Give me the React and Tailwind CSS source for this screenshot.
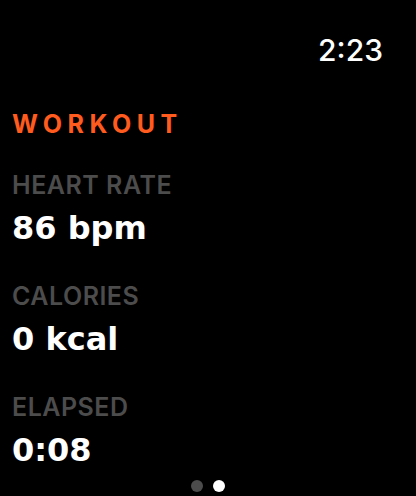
const stats = [
  { label: 'HEART RATE', value: '86 bpm' },
  { label: 'CALORIES', value: '0 kcal' },
  { label: 'ELAPSED', value: '0:08' },
];

const App = () => {
  return (
    <div className="w-[416px] h-[496px] bg-black text-white overflow-hidden font-['Inter',sans-serif] flex flex-col">
      <div className="flex justify-end pr-[33px] pt-[34px]">
        <span className="text-[30px] leading-[32px] font-medium">2:23</span>
      </div>

      <div className="px-[12px] pt-[44px]">
        <h1 className="text-[25px] leading-[28px] font-bold tracking-[0.22em] text-[#ff5b1e]">WORKOUT</h1>

        <div className="mt-[32px] flex flex-col gap-[35px]">
          {stats.map((s) => (
            <div key={s.label} className="flex flex-col">
              <span className="text-[25px] leading-[30px] font-semibold tracking-[0.02em] text-[#4c4c4c]">{s.label}</span>
              <span className="mt-[10px] text-[32px] leading-[36px] font-bold font-['DejaVu_Sans',sans-serif]">{s.value}</span>
            </div>
          ))}
        </div>
      </div>

      <div className="mt-auto mb-[4px] flex justify-center gap-[10px]">
        <span className="w-[12px] h-[12px] rounded-full bg-[#4c4c4c]" />
        <span className="w-[12px] h-[12px] rounded-full bg-white" />
      </div>
    </div>
  );
};

export default App;
